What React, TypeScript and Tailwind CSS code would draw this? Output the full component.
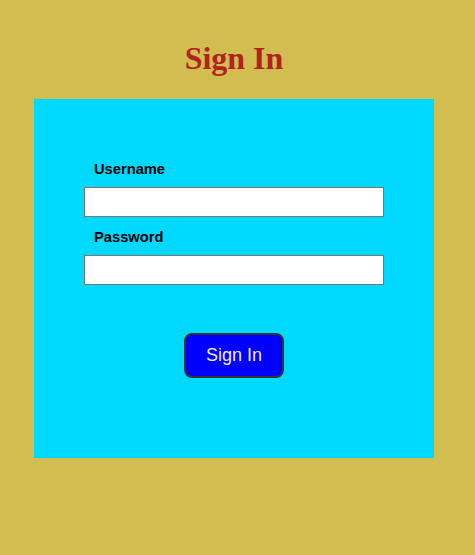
export default function App() {
  return (
    <div className="min-h-[555px] w-full bg-[#d2be50] pt-[42px] font-['Liberation_Sans',Arial,sans-serif]">
      <h1 className="text-center text-[32px] leading-[32px] font-bold text-[#b22222] font-['Liberation_Serif','Times_New_Roman',serif] pl-[-7px] mr-[7px]">
        Sign In
      </h1>

      <div className="ml-[34px] mt-[25px] w-[400px] bg-[#00d9ff] pt-[62px] pb-[80px] flex flex-col items-center">
        <div className="w-[300px] flex flex-col">
          <label className="pl-[10px] text-[14.7px] leading-[17px] font-bold text-black">
            Username
          </label>
          <input
            type="text"
            className="mt-[9px] h-[30px] w-[300px] bg-white border border-[#767676] outline-none"
          />
          <label className="mt-[12px] pl-[10px] text-[14.7px] leading-[17px] font-bold text-black">
            Password
          </label>
          <input
            type="password"
            className="mt-[9px] h-[30px] w-[300px] bg-white border border-[#767676] outline-none"
          />
        </div>

        <button className="mt-[48px] h-[45px] w-[100px] rounded-[8px] border-2 border-[#333333] bg-[#0000ff] text-[18px] text-[#f0f0f0]">
          Sign In
        </button>
      </div>
    </div>
  );
}
